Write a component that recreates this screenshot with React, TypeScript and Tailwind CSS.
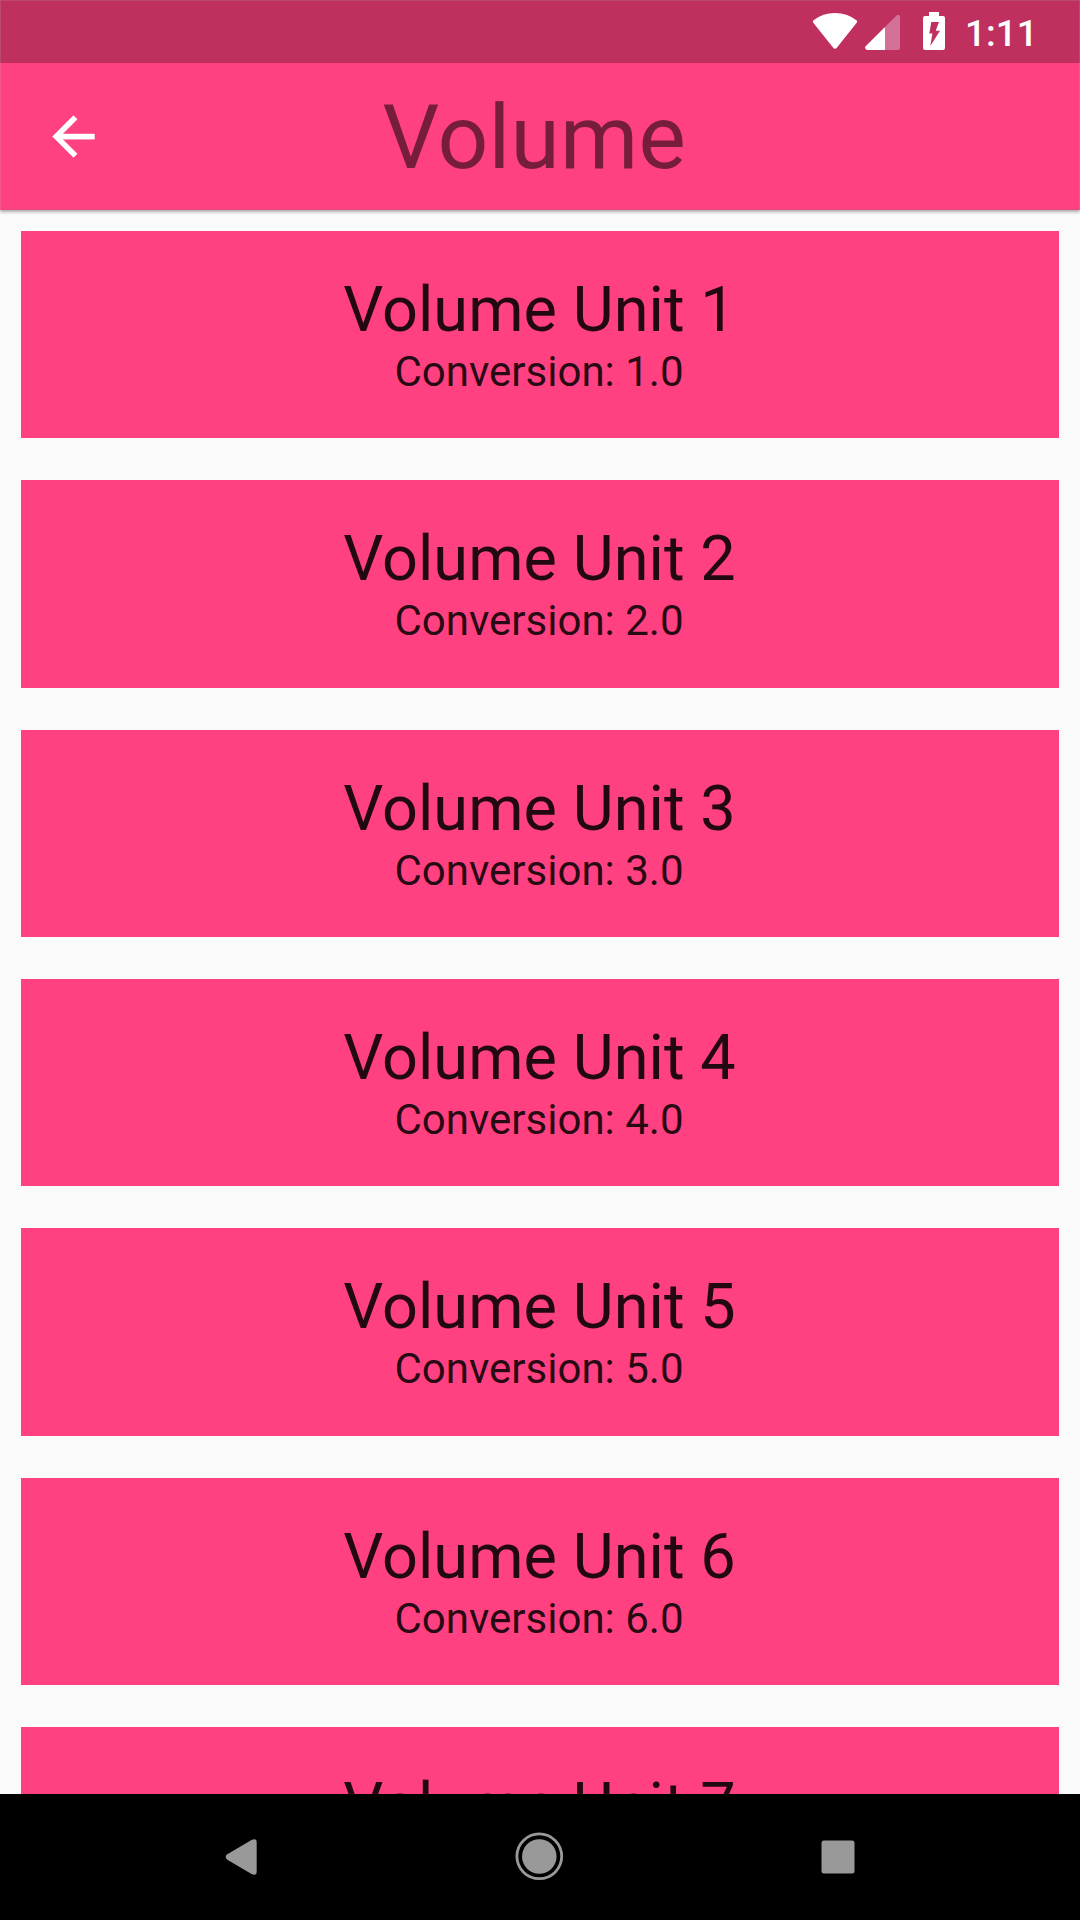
const units = [1, 2, 3, 4, 5, 6, 7];

function StatusBar() {
  return (
    <div className="flex h-[63px] shrink-0 bg-[#bf305f] shadow-[inset_1px_1px_0_#bd4970,inset_-1px_0_0_#bd4970]">
      <svg width="1080" height="63" viewBox="0 0 1080 63" aria-hidden="true" className="text-white">
        <path
          d="M813.2 20.4Q812.4 21.6 813.3 22.8L833 47.4Q835 50 837 47.4L856.7 22.8Q857.6 21.6 856.8 20.4Q847 13 835 13T813.2 20.4Z"
          fill="currentColor"
        />
        <path d="M885 27V50H867.5Q865 50 865 47.6Q865 46.8 865.7 46.2Z" fill="currentColor" />
        <path d="M885 27L896.6 15.5Q897.5 14.7 898.5 14.8Q900 15.2 900 16.8V47.8Q900 50 897.8 50H885Z" fill="#d47196" />
        <path
          d="M929 12H939V16H943Q945 16 945 18V48Q945 50 943 50H925Q923 50 923 48V18Q923 16 925 16H929ZM931.3 22L929.3 33.5H932.4L930.3 46L940 30.8H935.7L939 22Z"
          fill="currentColor"
          fillRule="evenodd"
        />
        <text x="965" y="46" fontFamily="Roboto" fontWeight="500" fontSize="37" fill="currentColor">
          1:11
        </text>
      </svg>
    </div>
  );
}

function AppBar() {
  return (
    <header className="relative z-10 flex h-[147px] shrink-0 items-center bg-[#ff4081] shadow-[0_2px_3px_rgba(0,0,0,0.32),inset_1px_0_0_#f5588d,inset_-1px_0_0_#f5588d,inset_0_-1px_0_#e34a7e]">
      <button aria-label="Back" className="ml-[42px] flex size-[63px] items-center justify-center">
        <svg width="63" height="63" viewBox="0 0 24 24" fill="#ffffff" stroke="#ffffff" strokeWidth="0.15">
          <path d="M20 11H7.83l5.59-5.59L12 4l-8 8 8 8 1.41-1.41L7.83 13H20v-2z" />
        </svg>
      </button>
      <h1 className="ml-[277.5px] pt-[1px] text-[89.25px] leading-[105px] tracking-[0.2px] text-black/54">Volume</h1>
    </header>
  );
}

function UnitCard({ value }: { value: number }) {
  return (
    <div className="mx-[21px] flex h-[207.36px] shrink-0 flex-col items-center bg-[#ff4081] pt-[42px] pr-[2px] text-black/87">
      <div className="pl-px text-[63px] leading-[74px] tracking-[0.08px]">Volume Unit {value}</div>
      <div className="text-[42px] leading-[49px]">Conversion: {value}.0</div>
    </div>
  );
}

function NavBar() {
  return (
    <nav className="flex h-[126px] shrink-0 bg-black">
      <svg width="1080" height="126" viewBox="0 0 1080 126" fill="#999999" aria-hidden="true">
        <path d="M227.3 60.3L251.5 46Q256.7 43.6 256.7 48.5V77.5Q256.7 82.4 251.5 80L227.3 65.7Q224 63 227.3 60.3Z" />
        <circle cx="539.3" cy="62.5" r="17.3" />
        <circle cx="539.3" cy="62.3" r="22.4" fill="none" stroke="#999999" strokeWidth="2.8" />
        <rect x="821.5" y="46.5" width="33" height="33" rx="2.5" />
      </svg>
    </nav>
  );
}

export default function App() {
  return (
    <div className="flex h-[1920px] w-[1080px] flex-col overflow-hidden bg-[#fafafa] font-[Roboto,sans-serif]">
      <StatusBar />
      <AppBar />
      <main className="flex min-h-0 flex-1 flex-col gap-[42px] overflow-hidden pt-[21px]">
        {units.map((unit) => (
          <UnitCard key={unit} value={unit} />
        ))}
      </main>
      <NavBar />
    </div>
  );
}
